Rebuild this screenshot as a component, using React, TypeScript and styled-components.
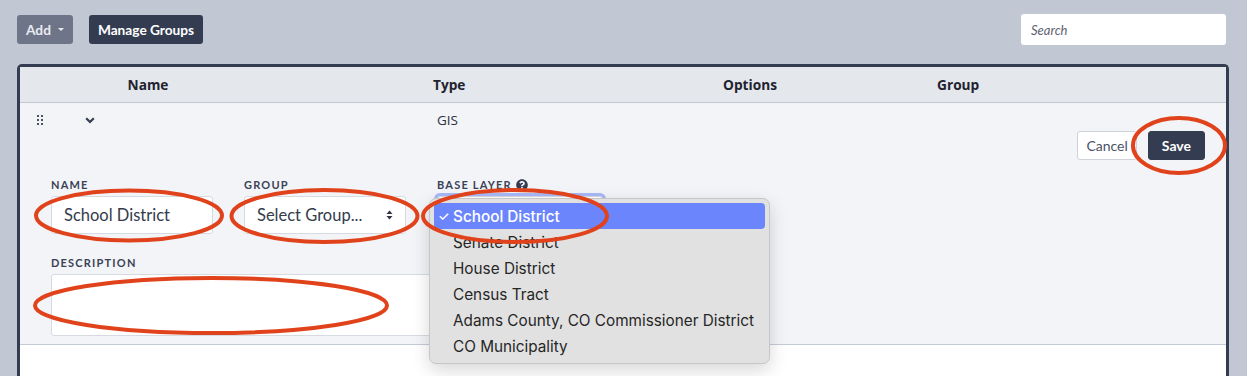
import styled, { createGlobalStyle } from "styled-components";
import { FaQuestionCircle } from "react-icons/fa";

const GlobalStyle = createGlobalStyle`
    html, body {
        margin: 0;
        padding: 0;
        background: #c1c7d3;
    }
    body {
        font-family: Lato, "Open Sans", sans-serif;
        color: #232838;
    }
    * {
        box-sizing: border-box;
    }
`;

const Page = styled.div`
    position: relative;
    height: 376px;
    overflow: hidden;
    padding: 14px 18px 0 17px;
    display: flex;
    flex-direction: column;
`;

const Toolbar = styled.div`
    display: flex;
    align-items: center;
    justify-content: space-between;
    height: 31px;
    margin-bottom: 19px;
    padding-right: 3px;
`;

const ToolGroup = styled.div`
    display: flex;
    align-items: center;
    gap: 16px;
`;

const ToolButton = styled.button<{ $muted?: boolean }>`
    display: flex;
    align-items: center;
    gap: 6px;
    height: 29px;
    padding: 0 9px;
    border: none;
    border-radius: 3px;
    background: ${(p) => (p.$muted ? "#6e7589" : "#343c51")};
    color: ${(p) => (p.$muted ? "#e9ebf0" : "#ffffff")};
    font-family: Lato, sans-serif;
    font-size: 13.7px;
    font-weight: 700;
`;

const Caret = styled.span`
    width: 0;
    height: 0;
    border-left: 3px solid transparent;
    border-right: 3px solid transparent;
    border-top: 3px solid currentColor;
    margin-left: 1px;
`;

const Search = styled.input`
    width: 205px;
    height: 31px;
    border: none;
    border-radius: 3px;
    background: #fff;
    padding: 0 10px;
    font-family: Lato, sans-serif;
    font-size: 13px;
    font-style: italic;
    &::placeholder {
        color: #5d6371;
    }
`;

const Panel = styled.div`
    flex: 1;
    border: 3px solid #343c51;
    border-bottom: none;
    border-radius: 5px 5px 0 0;
    background: #fff;
`;

const cols = "80px 96px 237px 290px 214px 1fr";

const HeaderRow = styled.div`
    display: grid;
    grid-template-columns: ${cols};
    align-items: center;
    height: 36px;
    background: #e4e7ec;
    border-bottom: 1px solid #c3c9d4;
    font-family: "Open Sans", sans-serif;
    font-size: 13.7px;
    font-weight: 700;
    color: #1f2330;
`;

const HeadCell = styled.div<{ $center?: boolean }>`
    text-align: ${(p) => (p.$center ? "center" : "left")};
`;

const Row = styled.div`
    background: #f3f4f8;
    border-bottom: 1px solid #c5cbd6;
    padding: 7px 21px 8px 0;
`;

const TopLine = styled.div`
    display: grid;
    grid-template-columns: ${cols};
    align-items: center;
    height: 20px;
`;

const HandleCell = styled.div`
    display: flex;
    align-items: center;
    gap: 42px;
    padding-left: 17px;
    color: #343c51;
`;

const TypeCell = styled.div`
    padding-left: 4px;
    font-family: "Open Sans", sans-serif;
    font-size: 13.5px;
    color: #2b3040;
`;

const Actions = styled.div`
    display: flex;
    justify-content: flex-end;
    gap: 11px;
    margin-top: 1px;
`;

const ActionButton = styled.button<{ $primary?: boolean }>`
    height: 29px;
    padding: 0 ${(p) => (p.$primary ? "13px" : "8px")};
    border-radius: 3px;
    border: 1px solid ${(p) => (p.$primary ? "#343c51" : "#cdd2db")};
    background: ${(p) => (p.$primary ? "#343c51" : "#fff")};
    color: ${(p) => (p.$primary ? "#fff" : "#4b5265")};
    font-family: Lato, sans-serif;
    font-size: 14px;
    font-weight: ${(p) => (p.$primary ? 700 : 400)};
`;

const Form = styled.div`
    padding-left: 31px;
    margin-top: 18px;
`;

const FieldRow = styled.div`
    display: flex;
    gap: 31px;
`;

const Field = styled.div<{ $width?: number; $gapTop?: number }>`
    width: ${(p) => p.$width ?? 162}px;
    margin-top: ${(p) => p.$gapTop ?? 0}px;
`;

const Label = styled.div`
    display: flex;
    align-items: center;
    gap: 4px;
    height: 13px;
    margin-bottom: 5px;
    font-size: 11px;
    font-weight: 700;
    letter-spacing: 1.2px;
    text-transform: uppercase;
    color: #3a4256;
    svg {
        font-size: 12px;
        color: #343c51;
    }
`;

const TextInput = styled.div`
    display: flex;
    align-items: center;
    height: 38px;
    padding: 0 12px;
    border: 1px solid #d6dae1;
    border-radius: 3px;
    background: #fff;
    font-size: 16.5px;
    color: #343b4c;
`;

const SelectWrap = styled.div`
    position: relative;
`;

const SelectBox = styled(TextInput)<{ $focused?: boolean }>`
    justify-content: space-between;
    box-shadow: ${(p) => (p.$focused ? "0 0 0 3px #a8b8f7" : "none")};
`;

const TextArea = styled.div`
    height: 62px;
    border: 1px solid #d6dae1;
    border-radius: 3px;
    background: #fff;
`;

const Dropdown = styled.div`
    position: absolute;
    top: 2px;
    left: -8px;
    width: 341px;
    padding: 4px 4px;
    background: #e1e1e1;
    border: 1px solid #c6c6c6;
    border-radius: 7px;
    box-shadow: 0 6px 18px rgba(0, 0, 0, 0.16);
    font-family: Inter, Roboto, sans-serif;
    font-size: 15.3px;
    font-weight: 400;
    color: #262626;
    z-index: 5;
`;

const Option = styled.div<{ $selected?: boolean }>`
    position: relative;
    display: flex;
    align-items: center;
    height: 26px;
    padding-left: 19px;
    border-radius: 4px;
    background: ${(p) => (p.$selected ? "#6b85fd" : "transparent")};
    color: ${(p) => (p.$selected ? "#fff" : "#262626")};
    font-weight: ${(p) => (p.$selected ? 500 : 400)};
`;

const Check = styled.span`
    position: absolute;
    left: 4px;
    font-size: 13px;
`;

const Marks = styled.svg`
    position: absolute;
    left: 0;
    top: 0;
    pointer-events: none;
    z-index: 10;
`;

function DragHandle() {
    return (
        <svg width="6" height="10" viewBox="0 0 6 10">
            {[1, 5, 9].map((y) =>
                [1, 5].map((x) => <rect key={`${x}-${y}`} x={x - 1} y={y - 1} width="2" height="2" fill="#4a5266" />)
            )}
        </svg>
    );
}

function Chevron() {
    return (
        <svg width="10" height="7" viewBox="0 0 10 7">
            <polyline points="1.2,1.2 5,5 8.8,1.2" fill="none" stroke="#343c51" strokeWidth="2.2" />
        </svg>
    );
}

function UpDown() {
    return (
        <svg width="7" height="12" viewBox="0 0 7 12">
            <path d="M0.5 5 L3.5 1.5 L6.5 5 Z" fill="#2f3545" />
            <path d="M0.5 7 L3.5 10.5 L6.5 7 Z" fill="#2f3545" />
        </svg>
    );
}

const layers = [
    "School District",
    "Senate District",
    "House District",
    "Census Tract",
    "Adams County, CO Commissioner District",
    "CO Municipality",
];

function App() {
    return (
        <Page>
            <GlobalStyle />
            <Toolbar>
                <ToolGroup>
                    <ToolButton $muted>
                        Add <Caret />
                    </ToolButton>
                    <ToolButton>Manage Groups</ToolButton>
                </ToolGroup>
                <Search placeholder="Search" />
            </Toolbar>
            <Panel>
                <HeaderRow>
                    <div />
                    <HeadCell $center>Name</HeadCell>
                    <div />
                    <HeadCell>Type</HeadCell>
                    <HeadCell>Options</HeadCell>
                    <HeadCell>Group</HeadCell>
                </HeaderRow>
                <Row>
                    <TopLine>
                        <HandleCell>
                            <DragHandle />
                            <Chevron />
                        </HandleCell>
                        <div />
                        <div />
                        <TypeCell>GIS</TypeCell>
                    </TopLine>
                    <Actions>
                        <ActionButton>Cancel</ActionButton>
                        <ActionButton $primary>Save</ActionButton>
                    </Actions>
                    <Form>
                        <FieldRow>
                            <Field>
                                <Label>Name</Label>
                                <TextInput>School District</TextInput>
                            </Field>
                            <Field>
                                <Label>Group</Label>
                                <SelectBox>
                                    Select Group...
                                    <UpDown />
                                </SelectBox>
                            </Field>
                            <Field $width={166}>
                                <Label>
                                    Base Layer <FaQuestionCircle />
                                </Label>
                                <SelectWrap>
                                    <SelectBox $focused>School District</SelectBox>
                                    <Dropdown>
                                        {layers.map((l, i) => (
                                            <Option key={l} $selected={i === 0}>
                                                {i === 0 && <Check>✓</Check>}
                                                {l}
                                            </Option>
                                        ))}
                                    </Dropdown>
                                </SelectWrap>
                            </Field>
                        </FieldRow>
                        <Field $width={548} $gapTop={22}>
                            <Label>Description</Label>
                            <TextArea />
                        </Field>
                    </Form>
                </Row>
            </Panel>
            <Marks width="1247" height="376" viewBox="0 0 1247 376">
                <g fill="none" stroke="#e0431b" strokeWidth="4">
                    <ellipse cx="129" cy="215.5" rx="93" ry="25" />
                    <ellipse cx="324.5" cy="216" rx="93" ry="26" />
                    <ellipse cx="515" cy="216" rx="92" ry="26" />
                    <ellipse cx="211" cy="305.5" rx="176" ry="27.5" />
                    <ellipse cx="1179" cy="145.5" rx="46" ry="27.5" />
                </g>
            </Marks>
        </Page>
    );
}

export default App;
